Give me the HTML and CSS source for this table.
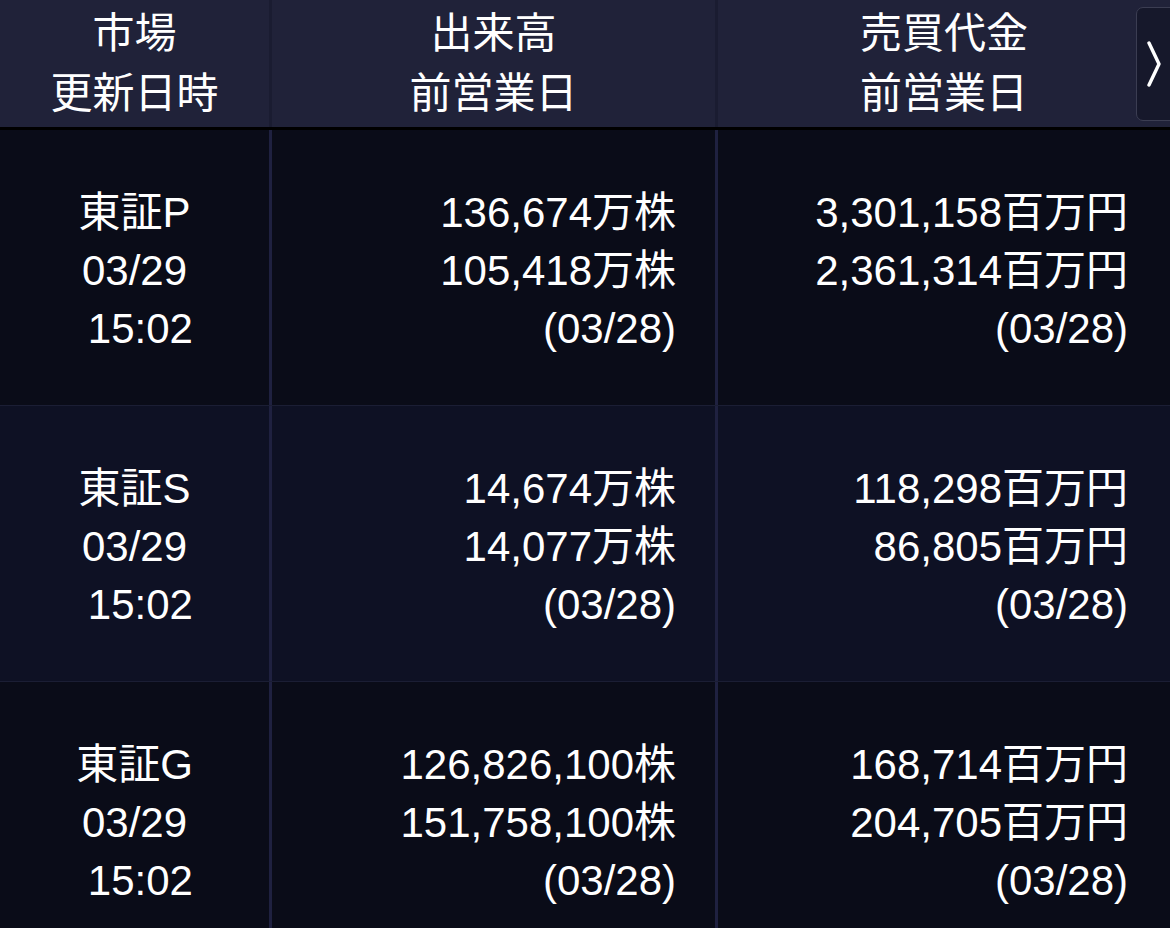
FILE: index.html
```html
<!DOCTYPE html>
<html lang="ja">
<head>
<meta charset="utf-8">
<link rel="stylesheet" href="styles.css">
</head>
<body>
<div class="table">
  <div class="head">
    <div class="hcell c1"><span>市場</span><span>更新日時</span></div>
    <div class="hcell c2"><span>出来高</span><span>前営業日</span></div>
    <div class="hcell c3"><span>売買代金</span><span>前営業日</span></div>
    <div class="next">
      <svg width="16" height="46" viewBox="0 0 16 46"><polyline points="3,2 13,23 3,44" fill="none" stroke="#fff" stroke-width="3.4" stroke-linecap="round" stroke-linejoin="round"/></svg>
    </div>
  </div>
  <div class="row">
    <div class="cell c1 center"><span>東証P</span><span>03/29</span><span class="pre"> 15:02</span></div>
    <div class="cell c2 right"><span>136,674万株</span><span>105,418万株</span><span>(03/28)</span></div>
    <div class="cell c3 right"><span>3,301,158百万円</span><span>2,361,314百万円</span><span>(03/28)</span></div>
  </div>
  <div class="row alt">
    <div class="cell c1 center"><span>東証S</span><span>03/29</span><span class="pre"> 15:02</span></div>
    <div class="cell c2 right"><span>14,674万株</span><span>14,077万株</span><span>(03/28)</span></div>
    <div class="cell c3 right"><span>118,298百万円</span><span>86,805百万円</span><span>(03/28)</span></div>
  </div>
  <div class="row">
    <div class="cell c1 center"><span>東証G</span><span>03/29</span><span class="pre"> 15:02</span></div>
    <div class="cell c2 right"><span>126,826,100株</span><span>151,758,100株</span><span>(03/28)</span></div>
    <div class="cell c3 right"><span>168,714百万円</span><span>204,705百万円</span><span>(03/28)</span></div>
  </div>
</div>
</body>
</html>
```

FILE: styles.css
```css
*, *::before, *::after { box-sizing: border-box; }
html, body {
  margin: 0;
  padding: 0;
  background: #0a0c18;
}
body {
  width: 1170px;
  height: 928px;
  overflow: hidden;
  font-family: "Liberation Sans", "Noto Sans CJK JP", sans-serif;
  font-size: 42px;
  color: #ffffff;
}
.table {
  display: flex;
  flex-direction: column;
}
.head {
  position: relative;
  display: flex;
  height: 130px;
  background: #202239;
  border-bottom: 3px solid #000000;
}
.hcell {
  display: flex;
  flex-direction: column;
  align-items: center;
  justify-content: center;
  line-height: 60px;
}
.c1 { width: 269px; flex: none; }
.c2 { width: 446px; flex: none; border-left: 3px solid #1a1c31; }
.c3 { flex: 1; border-left: 3px solid #1a1c31; }
.next {
  position: absolute;
  right: -8px;
  top: 7px;
  width: 42px;
  height: 114px;
  border: 1px solid #3b3d52;
  border-radius: 7px;
  background: #16182b;
  display: flex;
  align-items: center;
  padding-left: 9px;
}
.next svg { display: block; }
.row {
  display: flex;
  height: 275px;
  background: #0a0c18;
}
.row + .row {
  height: 276px;
  border-top: 1px solid #1b1e34;
}
.row.alt { background: #0e1124; }
.row .c2, .row .c3 { border-left-color: #1f2140; }
.cell {
  display: flex;
  flex-direction: column;
  justify-content: center;
  line-height: 58px;
  padding-top: 6px;
}
.cell.center { align-items: center; }
.cell.right { align-items: flex-end; }
.row .c2 { padding-right: 39px; }
.row .c3 { padding-right: 42px; }
.pre { white-space: pre; }
```
